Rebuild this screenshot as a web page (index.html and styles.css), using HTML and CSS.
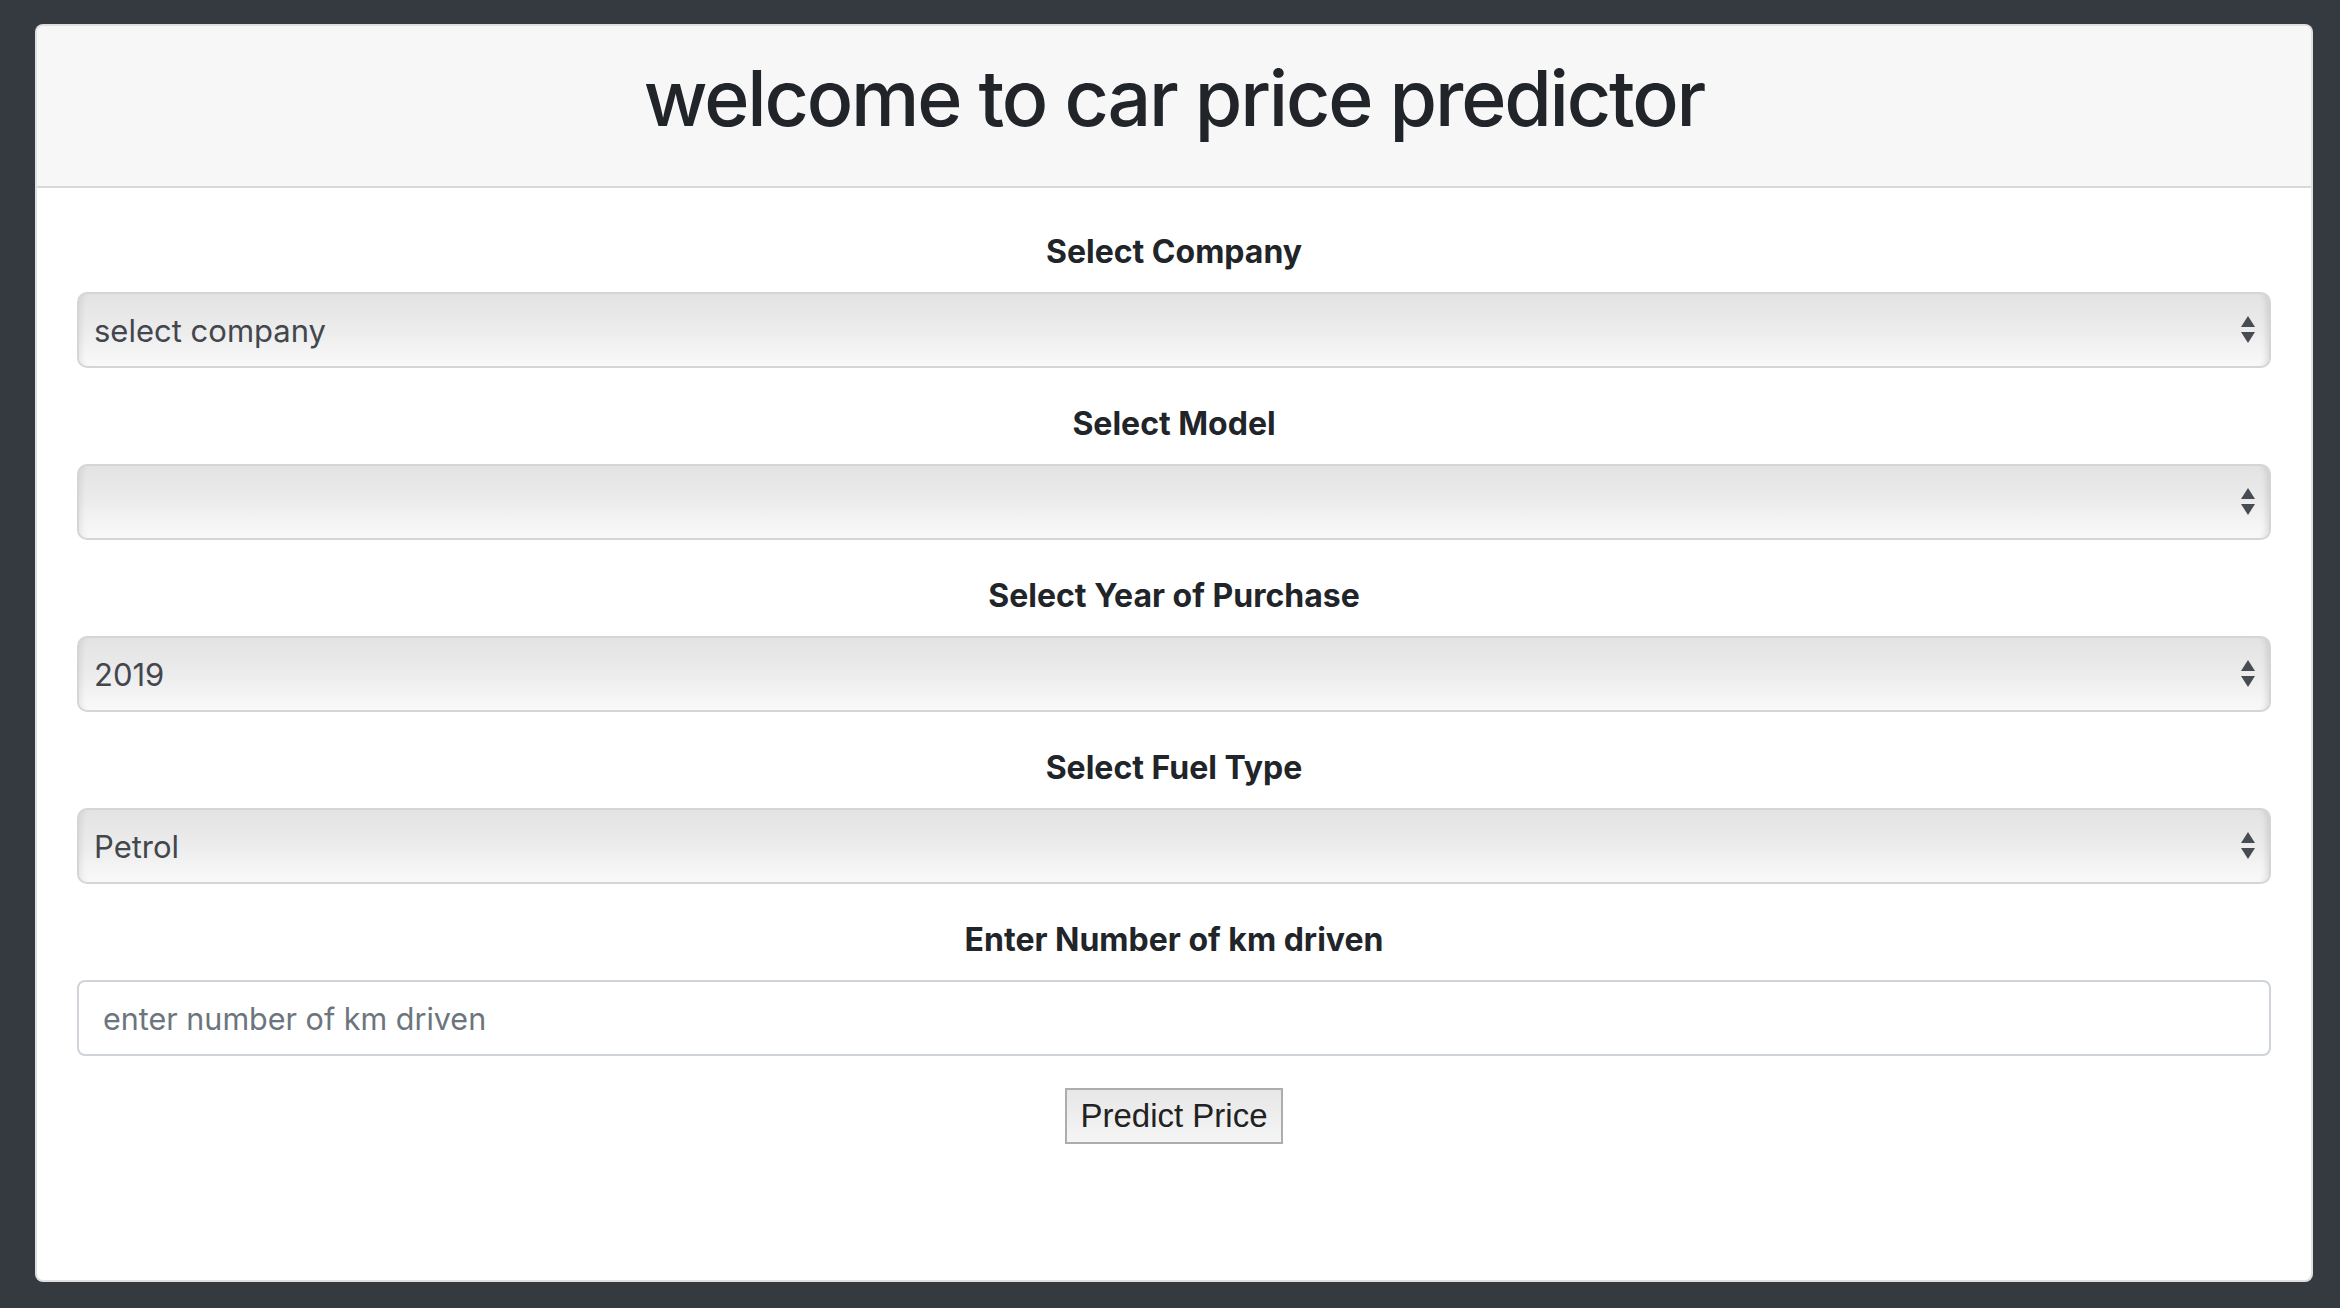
FILE: index.html
```html
<!DOCTYPE html>
<html lang="en">
<head>
<meta charset="utf-8">
<title>Car Price Predictor</title>
<link rel="stylesheet" href="styles.css">
</head>
<body>
<div class="card">
  <div class="card-header">
    <h1 class="title">welcome to car price predictor</h1>
  </div>
  <div class="card-body">
    <form class="form">
      <div class="form-group">
        <label class="label">Select Company</label>
        <div class="select"><span class="select-text">select company</span><svg class="arrows" width="16" height="28" viewBox="0 0 16 28"><path d="M8 0 L15 11 L1 11 Z" fill="#474b52"/><path d="M1 16 L15 16 L8 27 Z" fill="#474b52"/></svg></div>
      </div>
      <div class="form-group">
        <label class="label">Select Model</label>
        <div class="select"><span class="select-text"></span><svg class="arrows" width="16" height="28" viewBox="0 0 16 28"><path d="M8 0 L15 11 L1 11 Z" fill="#474b52"/><path d="M1 16 L15 16 L8 27 Z" fill="#474b52"/></svg></div>
      </div>
      <div class="form-group">
        <label class="label">Select Year of Purchase</label>
        <div class="select"><span class="select-text">2019</span><svg class="arrows" width="16" height="28" viewBox="0 0 16 28"><path d="M8 0 L15 11 L1 11 Z" fill="#474b52"/><path d="M1 16 L15 16 L8 27 Z" fill="#474b52"/></svg></div>
      </div>
      <div class="form-group">
        <label class="label">Select Fuel Type</label>
        <div class="select"><span class="select-text">Petrol</span><svg class="arrows" width="16" height="28" viewBox="0 0 16 28"><path d="M8 0 L15 11 L1 11 Z" fill="#474b52"/><path d="M1 16 L15 16 L8 27 Z" fill="#474b52"/></svg></div>
      </div>
      <div class="form-group">
        <label class="label">Enter Number of km driven</label>
        <input class="input" type="text" placeholder="enter number of km driven">
      </div>
      <div class="actions">
        <button class="btn" type="button">Predict Price</button>
      </div>
    </form>
  </div>
</div>
</body>
</html>
```

FILE: styles.css
```css
* { box-sizing: border-box; }
html, body { margin: 0; }
body {
  background: #343a40;
  height: 1308px;
  padding: 24px 27px 26px 35px;
  font-family: Inter, "Noto Sans", "Liberation Sans", sans-serif;
  color: #212529;
}
.card {
  width: 2278px;
  height: 1258px;
  background: #fff;
  border: 2px solid rgba(0,0,0,0.125);
  border-radius: 8px;
  overflow: hidden;
  display: flex;
  flex-direction: column;
}
.card-header {
  background: #f7f7f7;
  padding: 24px 40px;
  border-bottom: 2px solid #d9d9d9;
}
.title {
  margin: 0 0 16px;
  text-align: center;
  font-size: 77px;
  line-height: 96px;
  font-weight: 500;
  letter-spacing: -2.2px;
  color: #212529;
}
.card-body {
  padding: 40px;
  flex: 1;
}
.form-group {
  margin-bottom: 32px;
  text-align: center;
}
.label {
  display: block;
  font-size: 32px;
  line-height: 48px;
  font-weight: 700;
  margin-bottom: 16px;
  color: #212529;
}
.select {
  height: 76px;
  border: 2px solid #d3d6d9;
  border-radius: 10px;
  background: linear-gradient(to bottom, #e3e3e3 0%, #e9e9e9 35%, #ececec 50%, #f3f3f3 75%, #f9f9f9 100%);
  box-shadow: inset 8px 0 6px -6px rgba(0,0,0,0.08), inset -8px 0 6px -6px rgba(0,0,0,0.12);
  display: flex;
  align-items: center;
  justify-content: space-between;
  padding: 0 13px 0 15px;
  text-align: left;
}
.select-text {
  font-size: 31px;
  color: #43474d;
}
.arrows { display: block; }
.input {
  display: block;
  width: 100%;
  height: 76px;
  border: 2px solid #ced4da;
  border-radius: 8px;
  padding: 0 24px;
  font-family: inherit;
  font-size: 30.5px;
  color: #495057;
  background: #fff;
  outline: none;
}
.input::placeholder { color: #6c757d; }
.actions {
  display: flex;
  justify-content: center;
}
.btn {
  width: 218px;
  height: 56px;
  padding: 0;
  border: 2px solid #adadad;
  border-radius: 0;
  background: linear-gradient(to bottom, #e7e7e7, #f5f5f5);
  font-family: "Liberation Sans", Arial, sans-serif;
  font-size: 33px;
  color: #222;
}
```
